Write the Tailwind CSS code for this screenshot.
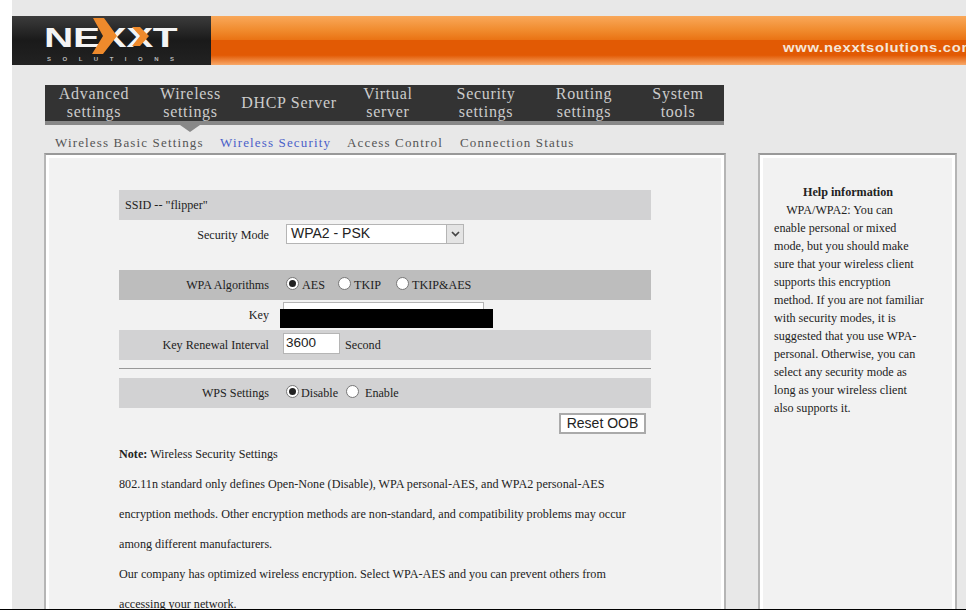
<!DOCTYPE html>
<html lang="en">

<head>
    <meta charset="UTF-8">
    <meta name="viewport" content="width=device-width, initial-scale=1.0">
    <title>Wireless Security</title>
    <script src="https://cdn.jsdelivr.net/npm/@tailwindcss/browser@4"></script>
</head>

<body class="bg-[linear-gradient(90deg,#fff_12px,#e8e8e8_12px)] h-[610px] overflow-hidden relative font-['Liberation_Serif',serif] text-[12.15px] text-[#222]">
    <!-- header banner -->
    <header class="ml-[12px] mt-[16px] h-[49px] flex bg-[linear-gradient(#f9a85a_0%,#f08a2c_30%,#ea7415_48%,#e25a04_49%,#e25a04_80%,#f8a868_100%)] overflow-hidden absolute top-0 left-0 right-0">
        <div class="w-[199px] h-full bg-[linear-gradient(#3c3c3c,#1a1a1a_50%,#222)] relative">
            <div class="absolute left-[32px] top-[8px] origin-left scale-x-[1.45] font-['Liberation_Sans',sans-serif] font-bold text-[28px] leading-[28px] text-[#f4f4f4] tracking-[-0.3px]">NEXXT</div>
            <svg class="absolute left-[78px] top-[1px]" width="70" height="40" viewBox="0 0 70 40">
                <path d="M3 1h11l13 18-14 18H2l11-18z" fill="#ee8a2c"/>
                <path d="M42 10h8l9 9-9 10h-8l8-10z" fill="#ee8a2c"/>
            </svg>
            <div class="absolute left-[35px] top-[39px] font-['Liberation_Sans',sans-serif] font-bold text-[6px] leading-[8px] tracking-[11.5px] text-[#bbb] whitespace-nowrap">SOLUTIONS</div>
        </div>
        <div class="flex-1 flex justify-end">
            <div class="pt-[24px] w-[183px] whitespace-nowrap origin-left scale-x-[1.14] font-['Liberation_Sans',sans-serif] font-bold text-[13px] leading-[16px] tracking-[0.6px] text-[#f6e6d8]">www.nexxtsolutions.com</div>
        </div>
    </header>

    <!-- main nav -->
    <nav class="absolute left-[45px] top-[85px] w-[679px] h-[40px] bg-[#333] border-b-[4px] border-[#888] flex text-[16px] leading-[18px] tracking-[0.7px] text-[#ccc] text-center items-center">
        <a class="w-[98px]">Advanced<br>settings</a>
        <a class="w-[95px]">Wireless<br>settings</a>
        <a class="w-[102px]">DHCP Server</a>
        <a class="w-[96px]">Virtual<br>server</a>
        <a class="w-[100px]">Security<br>settings</a>
        <a class="w-[96px]">Routing<br>settings</a>
        <a class="w-[92px]">System<br>tools</a>
    </nav>
    <div class="absolute left-[180px] top-[125px] w-0 h-0 border-x-[10px] border-x-transparent border-t-[7px] border-t-[#888]"></div>

    <!-- sub nav -->
    <div class="absolute left-[55px] top-[134px] flex text-[13px] leading-[18px] tracking-[1.15px] text-[#555] whitespace-nowrap">
        <a class="w-[165px]">Wireless Basic Settings</a>
        <a class="w-[127px] text-[#4a5fc8]">Wireless Security</a>
        <a class="w-[113px]">Access Control</a>
        <a>Connection Status</a>
    </div>

    <!-- content panel -->
    <main class="absolute left-[44px] top-[153px] w-[682px] h-[470px] bg-[#f2f2f2] border-2 border-[#b5b5b5] border-t-[#999] shadow-[inset_0_0_0_3px_#fff] pl-[73px] pt-[35px]">
        <div class="w-[532px]">
            <div class="h-[30px] bg-[#d2d2d3] flex items-center pl-[6px]">SSID -- "flipper"</div>
            <div class="h-[30px] flex items-center">
                <span class="w-[150px] text-right">Security Mode</span>
                <div class="ml-[17px] -mt-[3px] w-[178px] h-[20px] bg-white border border-[#b5b5b5] flex items-center font-['Liberation_Sans',sans-serif] text-[14px] text-[#222] pl-[4px] relative">
                    WPA2 - PSK
                    <span class="absolute right-0 top-0 w-[17px] h-[18px] bg-[#e4e4e4] border-l border-[#b5b5b5] flex items-center justify-center">
                        <svg width="9" height="6" viewBox="0 0 9 6"><path d="M1 1l3.500 3.500L8 1" fill="none" stroke="#444" stroke-width="1.700"/></svg>
                    </span>
                </div>
            </div>
            <div class="h-[20px]"></div>
            <div class="h-[30px] bg-[#bdbdbd] flex items-center">
                <span class="w-[150px] text-right">WPA Algorithms</span>
                <span class="ml-[17px] flex items-center">
                    <span class="-mt-[3px] w-[13px] h-[13px] rounded-full bg-white border border-[#777] flex items-center justify-center"><span class="w-[7px] h-[7px] rounded-full bg-[#222]"></span></span>
                    <span class="ml-[3px] w-[36px]">AES</span>
                    <span class="-mt-[3px] w-[13px] h-[13px] rounded-full bg-white border border-[#777]"></span>
                    <span class="ml-[3px] w-[42px]">TKIP</span>
                    <span class="-mt-[3px] w-[13px] h-[13px] rounded-full bg-white border border-[#777]"></span>
                    <span class="ml-[3px]">TKIP&amp;AES</span>
                </span>
            </div>
            <div class="h-[30px] flex items-center">
                <span class="w-[150px] text-right">Key</span>
                <div class="ml-[14px] -mt-[4px] w-[201px] h-[22px] bg-white border border-[#b5b5b5]"></div>
            </div>
            <div class="h-[30px] bg-[#d2d2d3] flex items-center">
                <span class="w-[150px] text-right">Key Renewal Interval</span>
                <div class="ml-[14px] -mt-[3px] w-[57px] h-[21px] bg-white border border-[#b5b5b5] flex items-center pl-[2px] font-['Liberation_Sans',sans-serif] text-[13.5px] text-[#222]">3600</div>
                <span class="ml-[5px]">Second</span>
            </div>
            <div class="mt-[8px] h-[1px] bg-[#999]"></div>
            <div class="mt-[9px] h-[30px] bg-[#d2d2d3] flex items-center">
                <span class="w-[150px] text-right">WPS Settings</span>
                <span class="ml-[17px] flex items-center">
                    <span class="-mt-[3px] w-[13px] h-[13px] rounded-full bg-white border border-[#777] flex items-center justify-center"><span class="w-[7px] h-[7px] rounded-full bg-[#222]"></span></span>
                    <span class="ml-[2px] w-[45px]">Disable</span>
                    <span class="-mt-[3px] w-[13px] h-[13px] rounded-full bg-white border border-[#777]"></span>
                    <span class="ml-[6px]">Enable</span>
                </span>
            </div>
            <div class="flex justify-end pr-[5px] mt-[5px]">
                <button class="w-[87px] h-[21px] bg-white border-2 border-[#aaa] font-['Liberation_Sans',sans-serif] text-[14px] text-[#222] flex items-center justify-center">Reset OOB</button>
            </div>
            <div class="mt-[5px] leading-[30px] text-[#222] whitespace-nowrap">
                <p><b>Note:</b> Wireless Security Settings</p>
                <p>802.11n standard only defines Open-None (Disable), WPA personal-AES, and WPA2 personal-AES</p>
                <p>encryption methods. Other encryption methods are non-standard, and compatibility problems may occur</p>
                <p>among different manufacturers.</p>
                <p>Our company has optimized wireless encryption. Select WPA-AES and you can prevent others from</p>
                <p>accessing your network.</p>
            </div>
        </div>
    </main>

    <!-- help panel -->
    <aside class="absolute left-[758px] top-[153px] w-[199px] h-[470px] bg-[#f2f2f2] border-2 border-[#b5b5b5] border-t-[#999] shadow-[inset_0_0_0_3px_#fff] pl-[14px] pr-[30px] pt-[28px] leading-[18px] text-[#222]">
        <div class="text-center font-bold -ml-[3px]">Help information</div>
        <p>&nbsp;&nbsp;&nbsp;&nbsp;WPA/WPA2: You can enable personal or mixed mode, but you should make sure that your wireless client supports this encryption method. If you are not familiar with security modes, it is suggested that you use WPA-personal. Otherwise, you can select any security mode as long as your wireless client also supports it.</p>
    </aside>

    <!-- redacted key -->
    <div class="absolute left-[280px] top-[309px] w-[213px] h-[19px] bg-black"></div>
    <div class="absolute left-0 right-0 bottom-0 h-[1px] bg-black"></div>
</body>

</html>
